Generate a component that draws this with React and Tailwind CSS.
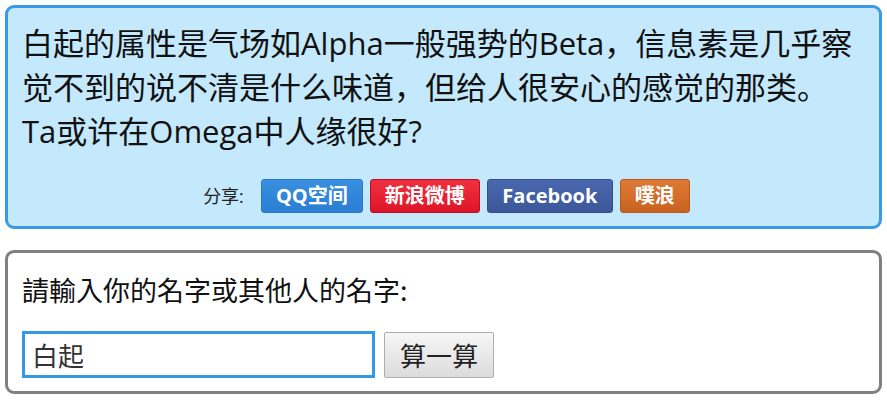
import React, { useState } from 'react';

const shareButtons = [
  { label: 'QQ空间', cls: 'w-[102px] bg-gradient-to-b from-[#3a8fe0] to-[#2a7ed3] border-[#2a78c8]' },
  { label: '新浪微博', cls: 'w-[110px] bg-gradient-to-b from-[#f0303f] to-[#dd1428] border-[#b80f20]' },
  { label: 'Facebook', cls: 'w-[126px] bg-gradient-to-b from-[#4a68b0] to-[#3b5798] border-[#34508c]' },
  { label: '噗浪', cls: 'w-[70px] bg-gradient-to-b from-[#de7a36] to-[#c9621f] border-[#b8581a]' },
];

export default function App() {
  const [name, setName] = useState('白起');

  return (
    <div className="min-h-[401px] bg-white p-[5px] font-['Open_Sans','Noto_Sans_CJK_SC',sans-serif]">
      <div className="flex flex-col gap-[21px]">
        {/* 结果 */}
        <div className="rounded-[9px] border-[3px] border-[#3a9ae6] bg-[#c4e8fc] pl-[14px] pr-[8px] pt-[13px] pb-[13px]">
          <p className="text-[31px] leading-[44px] text-[#111]">
            白起的属性是气场如Alpha一般强势的Beta，信息素是几乎察觉不到的说不清是什么味道，但给人很安心的感觉的那类。
            <br />
            Ta或许在Omega中人缘很好?
          </p>
          <div className="mt-[26px] flex h-[34px] items-center justify-center gap-[7px]">
            <span className="mr-[10px] text-[18px] text-[#222]">分享:</span>
            {shareButtons.map((b) => (
              <a
                key={b.label}
                href="#"
                className={`flex h-[34px] items-center justify-center rounded-[3px] border text-[20px] font-bold text-white ${b.cls}`}
              >
                {b.label}
              </a>
            ))}
          </div>
        </div>

        {/* 输入 */}
        <div className="rounded-[9px] border-[3px] border-[#808080] bg-white pl-[14px] pt-[17px] pb-[13px] font-['Noto_Sans_CJK_TC',sans-serif]">
          <p className="text-[27px] leading-[40px] text-[#111]">請輸入你的名字或其他人的名字:</p>
          <div className="mt-[21px] flex items-center gap-[9px]">
            <input
              value={name}
              onChange={(e) => setName(e.target.value)}
              className="h-[47px] w-[353px] border-[3px] border-[#3399e6] bg-white px-[7px] text-[26px] text-[#333] outline-none"
            />
            <button className="h-[46px] w-[110px] rounded-[2px] border border-[#adadad] bg-gradient-to-b from-[#f6f6f6] to-[#dcdcdc] text-[26px] text-[#222]">
              算一算
            </button>
          </div>
        </div>
      </div>
    </div>
  );
}
